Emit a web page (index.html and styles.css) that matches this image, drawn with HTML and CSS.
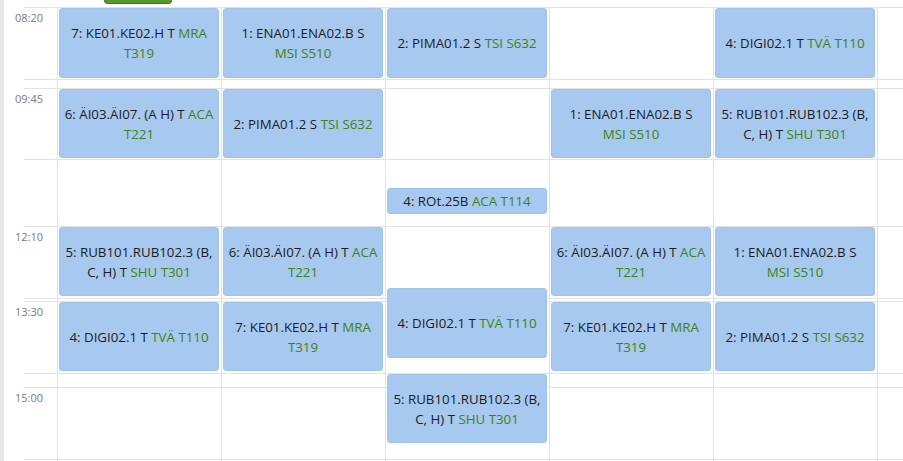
FILE: index.html
```html
<!DOCTYPE html>
<html lang="sv">
<head>
<meta charset="utf-8">
<title>Schema</title>
<link rel="stylesheet" href="styles.css">
</head>
<body>
<div class="board">
  <div class="strip"></div>
  <div class="tab-slot"><div class="tab"></div></div>

  <div class="row r1"></div><div class="time r1">08:20</div>
  <div class="row g1"></div>
  <div class="row r2"></div><div class="time r2">09:45</div>
  <div class="row r3"></div>
  <div class="row r4"></div><div class="time r4">12:10</div>
  <div class="row g2"></div>
  <div class="row r5"></div><div class="time r5">13:30</div>
  <div class="row g3"></div>
  <div class="row r6"></div><div class="time r6">15:00</div>
  <div class="row r7"></div>

  <div class="day d1">
    <div class="ev" style="top:1px;height:70px"><p>7: KE01.KE02.H T <span class="g">MRA T319</span></p></div>
    <div class="ev" style="top:82px;height:69px"><p>6: ÄI03.ÄI07. (A H) T <span class="g">ACA T221</span></p></div>
    <div class="ev" style="top:220px;height:69px"><p>5: RUB101.RUB102.3 (B, C, H) T <span class="g">SHU T301</span></p></div>
    <div class="ev" style="top:295px;height:69px"><p>4: DIGI02.1 T <span class="g">TVÄ T110</span></p></div>
  </div>
  <div class="day d2">
    <div class="ev" style="top:1px;height:70px"><p>1: ENA01.ENA02.B S<br><span class="g">MSI S510</span></p></div>
    <div class="ev" style="top:82px;height:69px"><p>2: PIMA01.2 S <span class="g">TSI S632</span></p></div>
    <div class="ev" style="top:220px;height:69px"><p>6: ÄI03.ÄI07. (A H) T <span class="g">ACA T221</span></p></div>
    <div class="ev" style="top:295px;height:69px"><p>7: KE01.KE02.H T <span class="g">MRA T319</span></p></div>
  </div>
  <div class="day d3">
    <div class="ev" style="top:1px;height:70px"><p>2: PIMA01.2 S <span class="g">TSI S632</span></p></div>
    <div class="ev" style="top:181px;height:26px"><p>4: ROt.25B <span class="g">ACA T114</span></p></div>
    <div class="ev" style="top:281px;height:70px"><p>4: DIGI02.1 T <span class="g">TVÄ T110</span></p></div>
    <div class="ev" style="top:367px;height:69px"><p>5: RUB101.RUB102.3 (B, C, H) T <span class="g">SHU T301</span></p></div>
  </div>
  <div class="day d4">
    <div class="ev" style="top:82px;height:69px"><p>1: ENA01.ENA02.B S<br><span class="g">MSI S510</span></p></div>
    <div class="ev" style="top:220px;height:69px"><p>6: ÄI03.ÄI07. (A H) T <span class="g">ACA T221</span></p></div>
    <div class="ev" style="top:295px;height:69px"><p>7: KE01.KE02.H T <span class="g">MRA T319</span></p></div>
  </div>
  <div class="day d5">
    <div class="ev" style="top:1px;height:70px"><p>4: DIGI02.1 T <span class="g">TVÄ T110</span></p></div>
    <div class="ev" style="top:82px;height:69px"><p>5: RUB101.RUB102.3 (B, C, H) T <span class="g">SHU T301</span></p></div>
    <div class="ev" style="top:220px;height:69px"><p>1: ENA01.ENA02.B S<br><span class="g">MSI S510</span></p></div>
    <div class="ev" style="top:295px;height:69px"><p>2: PIMA01.2 S <span class="g">TSI S632</span></p></div>
  </div>
  <div class="day d6"></div>
</div>
</body>
</html>
```

FILE: styles.css
```css
html, body {
  margin: 0;
  padding: 0;
  background: #fff;
  overflow: hidden;
}

body {
  font-family: "Open Sans", "DejaVu Sans", sans-serif;
  color: #1c1c1c;
}

.board {
  width: 903px;
  height: 461px;
  display: grid;
  grid-template-columns: 4px 20px 33px repeat(5, 164px) 1fr;
  grid-template-rows: 7px 72px 9px 71px 67px 72px 3px 72px 14px 72px 1fr;
  overflow: hidden;
}

.strip {
  grid-column: 1;
  grid-row: 1 / -1;
  background: #e8e8e8;
}

.tab-slot {
  grid-column: 4;
  grid-row: 1;
  padding-left: 47px;
}

.tab {
  width: 66px;
  height: 3px;
  background: #58982a;
  border: 1px solid #3f7b18;
  border-top: none;
  border-radius: 0 0 8px 8px;
}

.row {
  grid-column: 3 / -1;
  border-top: 1px solid #e3e3e3;
}

.r1 { grid-row: 2; }
.g1 { grid-row: 3; }
.r2 { grid-row: 4; }
.r3 { grid-row: 5; }
.r4 { grid-row: 6; }
.g2 { grid-row: 7; }
.r5 { grid-row: 8; }
.g3 { grid-row: 9; }
.r6 { grid-row: 10; }
.r7 { grid-row: 11; }

.time {
  grid-column: 2 / 4;
  text-align: right;
  padding: 3px 14px 0 0;
  font-size: 11px;
  line-height: 15px;
  color: #7a7a7a;
}

.day {
  grid-row: 2 / -1;
  position: relative;
  border-left: 1px solid #e3e3e3;
}

.d1 { grid-column: 4; }
.d2 { grid-column: 5; }
.d3 { grid-column: 6; }
.d4 { grid-column: 7; }
.d5 { grid-column: 8; }
.d6 { grid-column: 9; }

.ev {
  position: absolute;
  left: 1px;
  width: 160px;
  box-sizing: border-box;
  background: #a7c9ef;
  border: 1px solid #a1c4ec;
  border-radius: 3px;
  display: flex;
  align-items: center;
  justify-content: center;
  padding: 0 3px;
  text-align: center;
}

.ev p {
  margin: 0;
  font-size: 13.3px;
  line-height: 20px;
}

.g {
  color: #418210;
}
```
